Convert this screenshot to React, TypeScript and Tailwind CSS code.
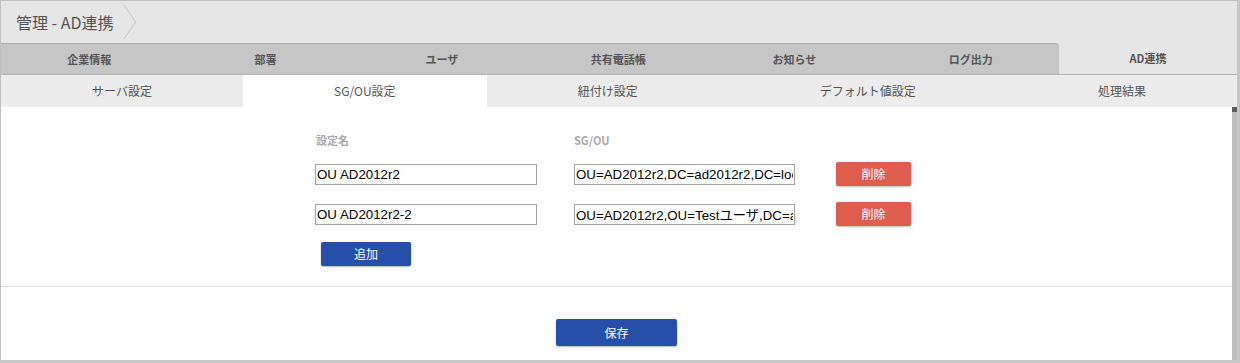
const font = 'font-["Noto_Sans_CJK_JP","Noto_Sans",sans-serif]';

const mainTabs = ['企業情報', '部署', 'ユーザ', '共有電話帳', 'お知らせ', 'ログ出力'];
const subTabs = ['サーバ設定', 'SG/OU設定', '紐付け設定', 'デフォルト値設定', '処理結果'];

const rows = [
  { name: 'OU AD2012r2', sgou: 'OU=AD2012r2,DC=ad2012r2,DC=local' },
  { name: 'OU AD2012r2-2', sgou: 'OU=AD2012r2,OU=Testユーザ,DC=ad2012r2,DC=local' },
];

export default function App() {
  return (
    <div className={`w-[1240px] h-[363px] bg-[#c6c6c6] ${font}`}>
      <div className="w-[1237px] h-[360px] flex flex-col border-l border-t border-[#c0c0c0] bg-white">
        {/* header / breadcrumb */}
        <div className="h-[42px] bg-[#e6e6e6] flex items-center">
          <span className="pl-[15px] text-[16px] text-[#555] leading-none">管理 - AD連携</span>
          <svg width="14" height="34" viewBox="0 0 14 34" className="ml-[10px]">
            <path d="M1 0 L12.5 17 L1 34" fill="none" stroke="#c4c4c4" strokeWidth="1" />
          </svg>
        </div>

        {/* main tabs */}
        <div className="h-[32px] flex bg-[#e6e6e6] border-b border-[#b4b4b4]">
          <div className="w-[1058px] flex bg-[#c6c6c6] border-t border-[#acacac] rounded-tr-[4px]">
            {mainTabs.map((t) => (
              <div key={t} className="flex-1 flex items-center justify-center text-[11px] font-bold text-[#555]">
                {t}
              </div>
            ))}
          </div>
          <div className="flex-1 flex items-center justify-center text-[11px] font-bold text-[#555]">AD連携</div>
        </div>

        {/* sub tabs */}
        <div className="h-[32px] flex bg-[#ececec]">
          {subTabs.map((t) => (
            <div
              key={t}
              className={`flex-auto flex items-center justify-center text-[12px] text-[#555] ${t === 'SG/OU設定' ? 'bg-white' : ''}`}
            >
              {t}
            </div>
          ))}
        </div>

        {/* content */}
        <div className="flex-1 flex">
          <div className="flex-1 flex flex-col">
            <div className="pt-[25px] pb-[20px] pl-[314px] border-b border-[#dcdcdc]">
              <div className="flex text-[11px] font-bold text-[#aaa] h-[16px] items-center">
                <span className="w-[259px] pl-[1px]">設定名</span>
                <span>SG/OU</span>
              </div>
              <div className="mt-[14px] flex flex-col gap-[16px]">
                {rows.map((r) => (
                  <div key={r.name} className="flex items-center h-[24px]">
                    <input
                      readOnly
                      defaultValue={r.name}
                      className='w-[222px] h-[21px] border border-[#a4a4a4] px-[1px] text-[13.3px] text-black font-["Liberation_Sans",Arial,sans-serif] outline-none'
                    />
                    <input
                      readOnly
                      defaultValue={r.sgou}
                      className='ml-[37px] w-[221px] h-[21px] border border-[#a4a4a4] px-[1px] text-[13.3px] text-black font-["Liberation_Sans","Noto_Sans_CJK_JP",sans-serif] outline-none'
                    />
                    <button className="ml-[41px] w-[75px] h-[24px] rounded-[2px] bg-[#e05e4f] text-white text-[12px] shadow-[0_1px_2px_rgba(0,0,0,0.25)]">
                      削除
                    </button>
                  </div>
                ))}
              </div>
              <button className="mt-[16px] ml-[6px] w-[90px] h-[24px] rounded-[2px] bg-[#274fa9] text-white text-[12px] shadow-[0_1px_2px_rgba(0,0,0,0.3)]">
                追加
              </button>
            </div>
            <div className="flex-1 flex justify-center pt-[32px]">
              <button className="w-[121px] h-[27px] rounded-[2px] bg-[#274fa9] text-white text-[12px] shadow-[0_1px_2px_rgba(0,0,0,0.3)]">
                保存
              </button>
            </div>
          </div>
          {/* scrollbar */}
          <div className="w-[5px] bg-[#bdbdbd]">
            <div className="h-[5px] bg-[#5e5e5e]" />
          </div>
        </div>
      </div>
    </div>
  );
}
